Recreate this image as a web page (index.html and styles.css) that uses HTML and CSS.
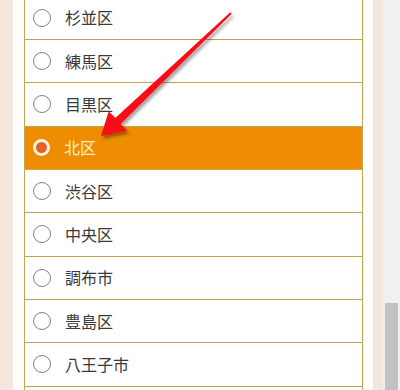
FILE: index.html
```html
<!DOCTYPE html>
<html lang="ja">
<head>
<meta charset="utf-8">
<link rel="stylesheet" href="styles.css">
</head>
<body>
<div class="page">
  <div class="side side-left"></div>
  <div class="panel">
    <ul class="list">
      <li class="row"><span class="radio"></span><span class="label">杉並区</span></li>
      <li class="row"><span class="radio"></span><span class="label">練馬区</span></li>
      <li class="row"><span class="radio"></span><span class="label">目黒区</span></li>
      <li class="row selected"><span class="radio"></span><span class="label">北区</span></li>
      <li class="row"><span class="radio"></span><span class="label">渋谷区</span></li>
      <li class="row"><span class="radio"></span><span class="label">中央区</span></li>
      <li class="row"><span class="radio"></span><span class="label">調布市</span></li>
      <li class="row"><span class="radio"></span><span class="label">豊島区</span></li>
      <li class="row"><span class="radio"></span><span class="label">八王子市</span></li>
      <li class="row"></li>
    </ul>
  </div>
  <div class="side side-right"></div>
  <div class="scrollbar"><div class="thumb"></div></div>
</div>
<svg class="arrow" width="400" height="390" viewBox="0 0 400 390">
  <defs>
    <filter id="sh" x="-20%" y="-20%" width="140%" height="140%">
      <feDropShadow dx="2" dy="3" stdDeviation="1.6" flood-color="#000" flood-opacity="0.35"/>
    </filter>
  </defs>
  <polygon filter="url(#sh)" fill="#f70f17" points="230.3,12.3 115.3,118.1 108.7,111.2 101,136 127.3,130.8 120.7,123.9 231.7,13.7"/>
</svg>
</body>
</html>
```
FILE: styles.css
```css
html, body {
  margin: 0;
  padding: 0;
  height: 100%;
  overflow: hidden;
}
body {
  background: #f3e7de;
  font-family: "Noto Sans CJK JP", "Noto Sans", sans-serif;
  position: relative;
}
.page {
  display: flex;
  height: 390px;
  width: 400px;
}
.side-left {
  width: 13px;
  background: #f3e7de;
}
.panel {
  width: 360px;
  background: #ffffff;
  padding: 0 10px 0 11px;
  box-sizing: border-box;
  overflow: hidden;
}
.side-right {
  width: 10px;
  background: #f3e6df;
}
.scrollbar {
  width: 17px;
  background: #f0f0f0;
  display: flex;
  flex-direction: column;
  align-items: center;
}
.thumb {
  margin-top: 303px;
  width: 13px;
  height: 100px;
  background: #c1c1c1;
}
.list {
  list-style: none;
  margin: -3.33px 0 0 0;
  padding: 0;
  border-left: 1px solid #c4a54e;
  border-right: 1px solid #c4a54e;
}
.row {
  display: flex;
  align-items: center;
  height: 42.33px;
  border-bottom: 1px solid #c4a54e;
  padding-left: 8px;
  gap: 14px;
  color: #3a3a3a;
  font-size: 16px;
}
.radio {
  width: 16px;
  height: 16px;
  border: 1px solid #808080;
  border-radius: 50%;
  background: #ffffff;
  flex: none;
}
.label {
  line-height: 1;
  padding-bottom: 1px;
}
.selected {
  background: #ee8c02;
  color: #fcefc4;
  border-bottom-color: #d9a23c;
}
.selected .radio {
  border: 3.5px solid #fdf3e3;
  width: 11px;
  height: 11px;
  background: #e4602a;
}
.arrow {
  position: absolute;
  left: 0;
  top: 0;
  pointer-events: none;
}
```
